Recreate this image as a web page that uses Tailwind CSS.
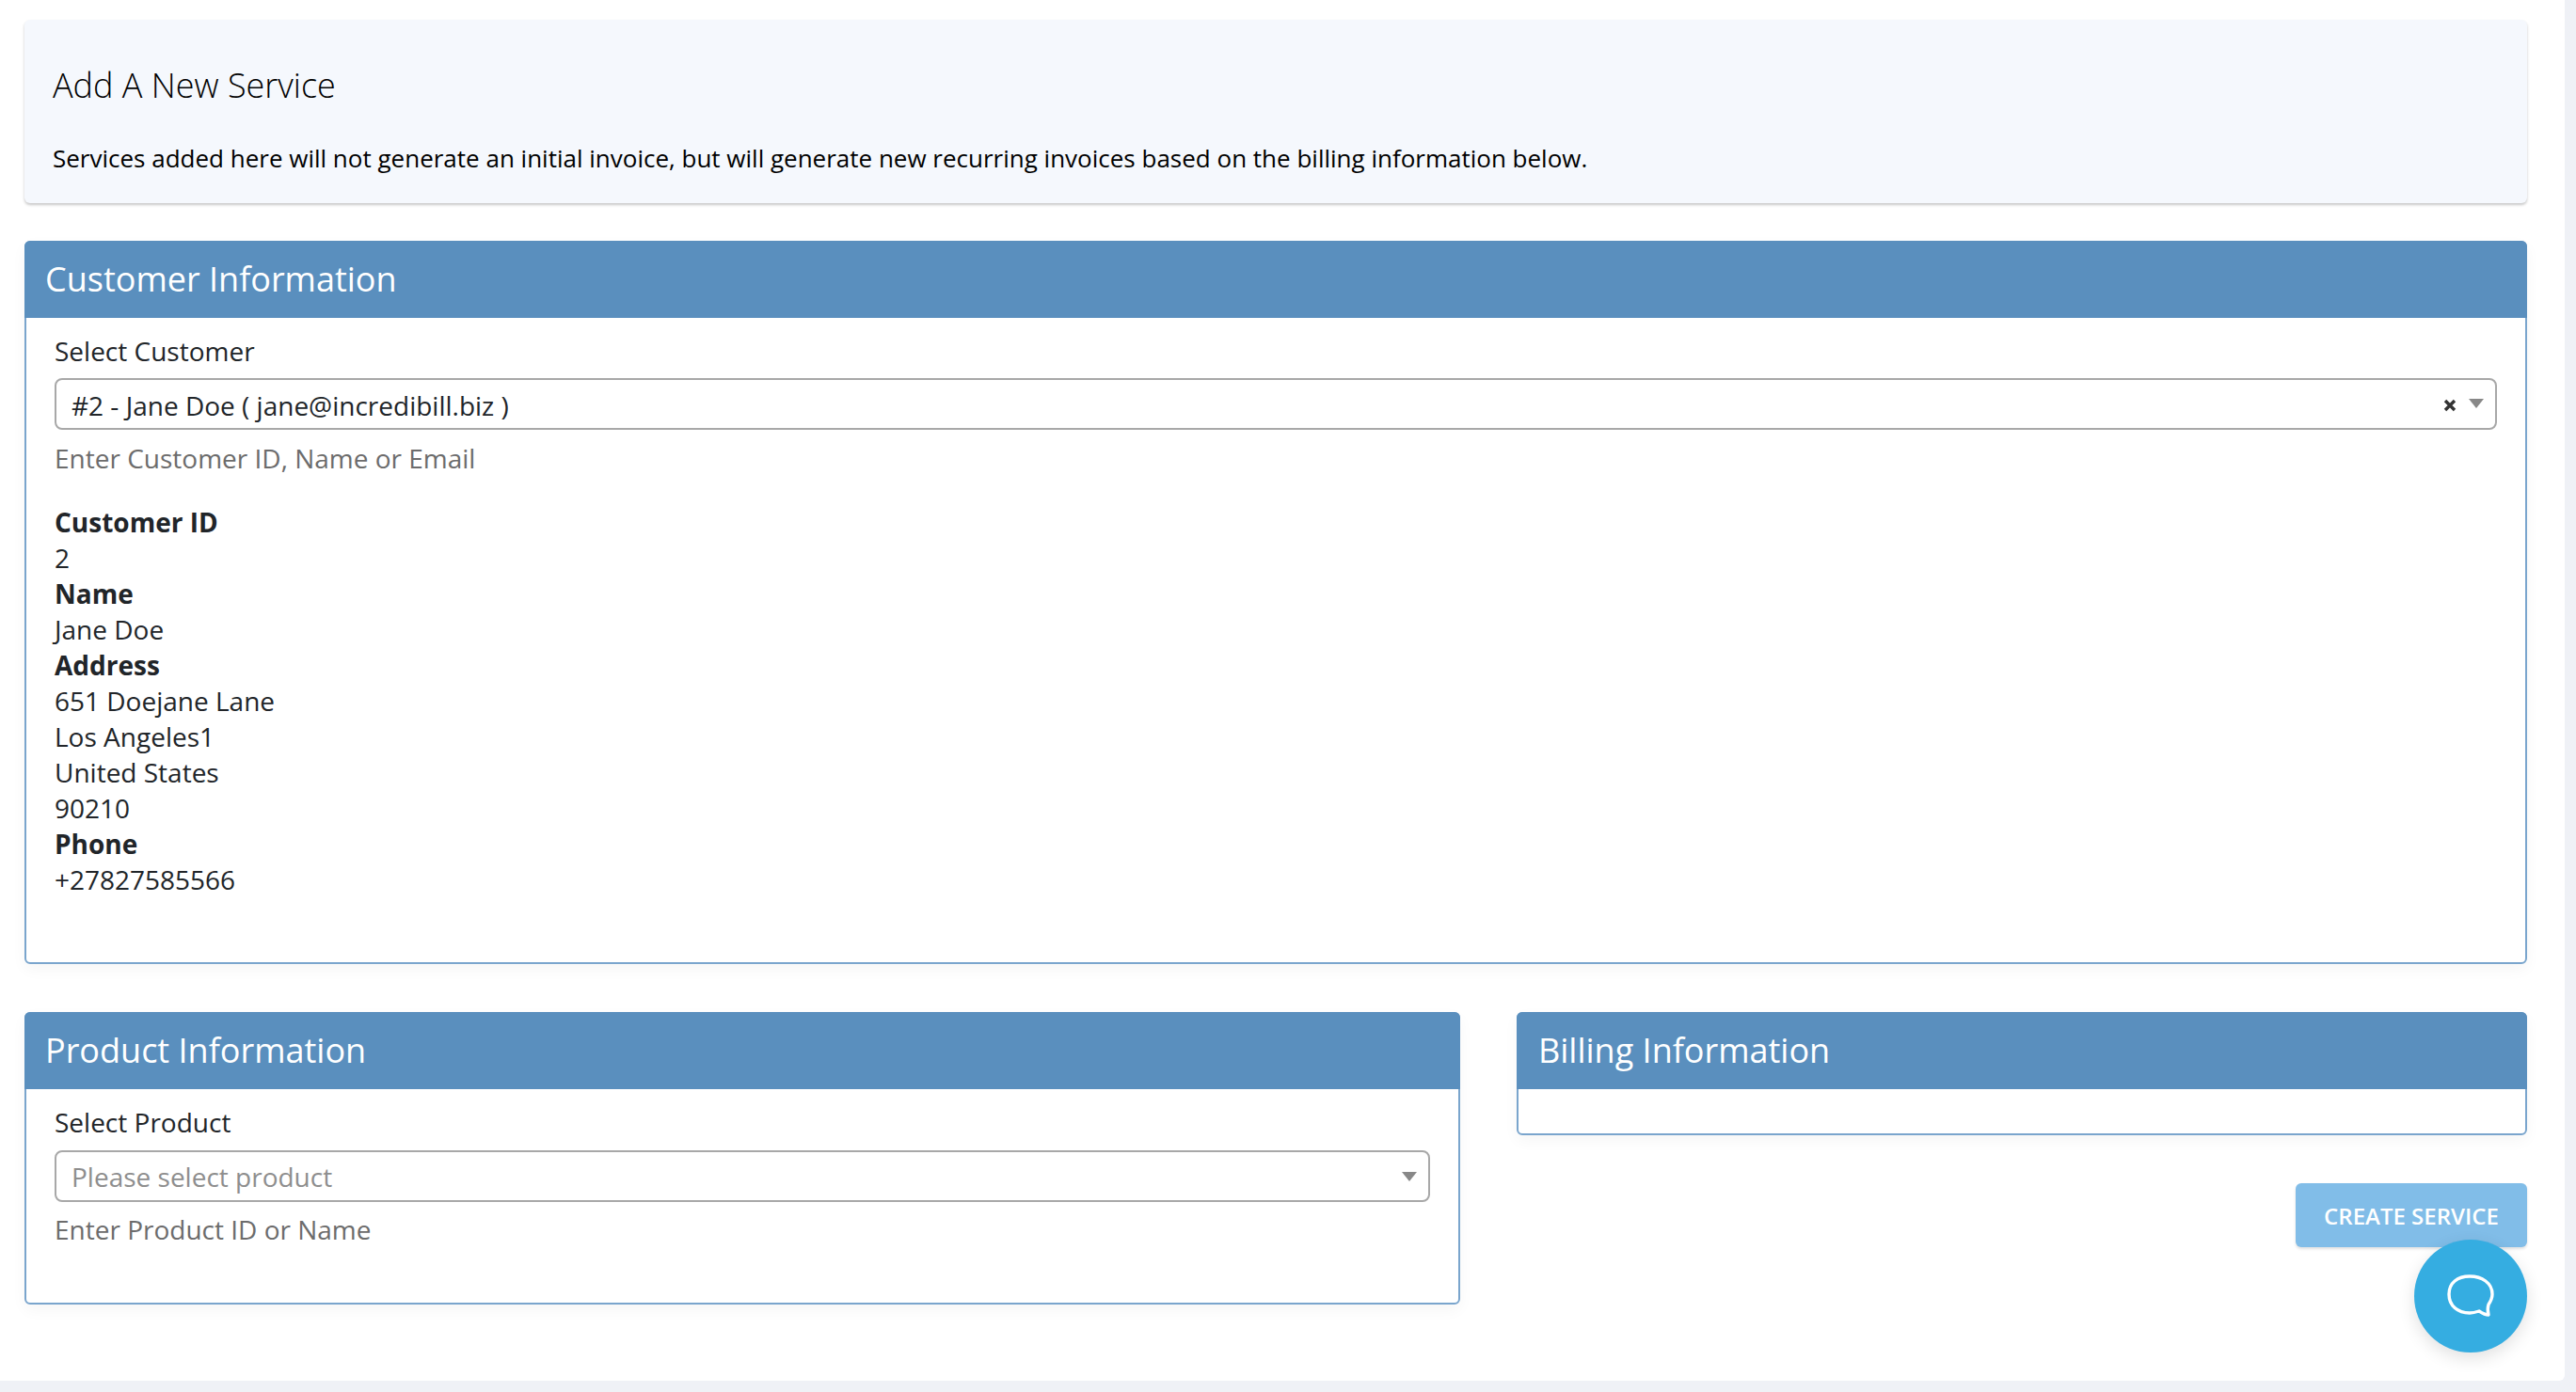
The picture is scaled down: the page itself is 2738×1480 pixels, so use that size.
<!DOCTYPE html>
<html lang="en">
<head>
    <meta charset="UTF-8">
    <title>Add A New Service</title>
    <script src="https://cdn.jsdelivr.net/npm/@tailwindcss/browser@4"></script>
</head>
<body class="bg-[#eff1f6] font-['Open_Sans',sans-serif] text-[28px] leading-[38px] text-[#212529] overflow-hidden">
    <div class="relative w-[2726px] h-[1468px] bg-white rounded-br-md pt-[21px] pl-[26px] pr-[40px]">

        <!-- page header -->
        <div class="h-[195px] bg-[#f5f8fd] rounded-md shadow-[0_2px_3px_rgba(0,0,0,0.22)] pl-[30px] pt-[45px]">
            <h1 class="font-light text-[36px] leading-[50px] text-black">Add A New Service</h1>
            <p class="mt-[33px] text-[26px] leading-[38px] text-black">Services added here will not generate an initial invoice, but will generate new recurring invoices based on the billing information below.</p>
        </div>

        <!-- customer -->
        <section class="mt-[40px] h-[769px] border-2 border-[#7aa5cd] rounded-md bg-white shadow-[0_6px_16px_rgba(0,0,0,0.04)]">
            <h2 class="h-[82px] -mt-[2px] -mx-[2px] bg-[#5a8fbe] rounded-t-md pl-[22px] text-white text-[36px] leading-[82px]">Customer Information</h2>
            <div class="pl-[30px] pr-[30px] pt-[16px]">
                <label class="block">Select Customer</label>
                <div class="mt-[10px] h-[55px] border-2 border-[#a8a8a8] rounded-lg flex items-center pl-[16px] pr-[12px]">
                    <span class="flex-1 pt-[2px]">#2 - Jane Doe ( jane@incredibill.biz )</span>
                    <svg class="w-[14px] h-[14px] mr-[13px] mt-[2px]" viewBox="0 0 14 14"><path d="M2 2l10 10M12 2L2 12" stroke="#333" stroke-width="3.4" fill="none"/></svg>
                    <span class="w-0 h-0 border-x-[8px] border-x-transparent border-t-[10px] border-t-[#888] mb-[2px]"></span>
                </div>
                <p class="mt-[11px] text-[#6c6c6c]">Enter Customer ID, Name or Email</p>
                <div class="mt-[30px]">
                    <p class="font-bold">Customer ID</p>
                    <p>2</p>
                    <p class="font-bold">Name</p>
                    <p>Jane Doe</p>
                    <p class="font-bold">Address</p>
                    <p>651 Doejane Lane</p>
                    <p>Los Angeles1</p>
                    <p>United States</p>
                    <p>90210</p>
                    <p class="font-bold">Phone</p>
                    <p>+27827585566</p>
                </div>
            </div>
        </section>

        <div class="mt-[51px] flex items-start gap-[60px]">
            <!-- product -->
            <section class="w-[1526px] h-[311px] border-2 border-[#7aa5cd] rounded-md bg-white shadow-[0_6px_16px_rgba(0,0,0,0.04)]">
                <h2 class="h-[82px] -mt-[2px] -mx-[2px] bg-[#5a8fbe] rounded-t-md pl-[22px] text-white text-[36px] leading-[82px]">Product Information</h2>
                <div class="pl-[30px] pr-[30px] pt-[16px]">
                    <label class="block">Select Product</label>
                    <div class="mt-[11px] h-[55px] border-2 border-[#a8a8a8] rounded-lg flex items-center pl-[16px] pr-[12px]">
                        <span class="flex-1 text-[#8e8e8e]">Please select product</span>
                        <span class="w-0 h-0 border-x-[8px] border-x-transparent border-t-[10px] border-t-[#888]"></span>
                    </div>
                    <p class="mt-[10px] text-[#6c6c6c]">Enter Product ID or Name</p>
                </div>
            </section>

            <!-- billing + submit -->
            <div class="flex-1 flex flex-col items-end">
                <section class="w-full h-[131px] border-2 border-[#7aa5cd] rounded-md bg-white shadow-[0_6px_16px_rgba(0,0,0,0.04)]">
                    <h2 class="h-[82px] -mt-[2px] -mx-[2px] bg-[#5a8fbe] rounded-t-md pl-[23px] text-white text-[36px] leading-[82px]">Billing Information</h2>
                </section>
                <button class="mt-[51px] w-[246px] h-[68px] bg-[#81bde8] rounded-md text-white font-semibold text-[24px] pt-[1px] shadow-[0_2px_3px_rgba(0,0,0,0.12)]">CREATE SERVICE</button>
            </div>
        </div>

        <!-- chat launcher -->
        <div class="absolute left-[2566px] top-[1318px] w-[120px] h-[120px] rounded-full bg-[#35ade1] flex items-center justify-center shadow-[0_6px_18px_rgba(0,0,0,0.12)]">
            <svg class="w-[50px] h-[46px]" viewBox="0 0 50 46" fill="none"><path d="M24 2C37 2 48 9 48 21C48 26 46 29 44 32C43 35 43 39 44 43C40 43 37 41 34 39C31 40 27 41 24 41C11 41 2 33 2 21C2 9 11 2 24 2Z" stroke="#fff" stroke-width="3.4" stroke-linejoin="round"/></svg>
        </div>
    </div>
</body>
</html>
